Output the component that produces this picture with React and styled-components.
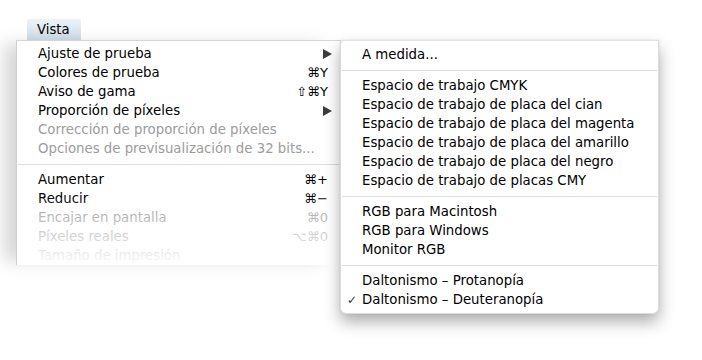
import React from "react";
import styled, { createGlobalStyle } from "styled-components";

const GlobalStyle = createGlobalStyle`
  html, body {
    margin: 0;
    padding: 0;
    background: #fff;
  }
  body {
    font-family: "DejaVu Sans", "Liberation Sans", sans-serif;
    font-size: 13px;
    color: #000;
  }
`;

const mainItems = [
  { label: "Ajuste de prueba", submenu: true },
  { label: "Colores de prueba", shortcut: "⌘Y" },
  { label: "Aviso de gama", shortcut: "⇧⌘Y" },
  { label: "Proporción de píxeles", submenu: true },
  { label: "Corrección de proporción de píxeles", disabled: true },
  { label: "Opciones de previsualización de 32 bits...", disabled: true },
  { separator: true },
  { label: "Aumentar", shortcut: "⌘+" },
  { label: "Reducir", shortcut: "⌘−" },
  { label: "Encajar en pantalla", shortcut: "⌘0", disabled: true },
  { label: "Píxeles reales", shortcut: "⌥⌘0", disabled: true },
  { label: "Tamaño de impresión", disabled: true },
];

const subItems = [
  { label: "A medida..." },
  { separator: true },
  { label: "Espacio de trabajo CMYK" },
  { label: "Espacio de trabajo de placa del cian" },
  { label: "Espacio de trabajo de placa del magenta" },
  { label: "Espacio de trabajo de placa del amarillo" },
  { label: "Espacio de trabajo de placa del negro" },
  { label: "Espacio de trabajo de placas CMY" },
  { separator: true },
  { label: "RGB para Macintosh" },
  { label: "RGB para Windows" },
  { label: "Monitor RGB" },
  { separator: true },
  { label: "Daltonismo – Protanopía" },
  { label: "Daltonismo – Deuteranopía", checked: true },
];

const App = () => {
  return (
    <>
      <GlobalStyle />
      <Page>
        <MenuBar>
          <MenuTitle>Vista</MenuTitle>
        </MenuBar>
        <DropArea>
          <MainMenu>
            {mainItems.map((item, i) =>
              item.separator ? (
                <Separator key={i} />
              ) : (
                <Row key={i} $disabled={item.disabled}>
                  <Label>{item.label}</Label>
                  {item.shortcut && <Shortcut>{item.shortcut}</Shortcut>}
                  {item.submenu && <Arrow />}
                </Row>
              )
            )}
            <Fade />
          </MainMenu>
          <SubMenu>
            {subItems.map((item, i) =>
              item.separator ? (
                <Separator key={i} />
              ) : (
                <Row key={i}>
                  {item.checked && <Check>✓</Check>}
                  <Label>{item.label}</Label>
                </Row>
              )
            )}
          </SubMenu>
        </DropArea>
      </Page>
    </>
  );
};

const Page = styled.div`
  width: 702px;
  height: 360px;
  padding-top: 19px;
  box-sizing: border-box;
  overflow: hidden;
`;

const MenuBar = styled.div`
  display: flex;
  height: 21px;
  padding-left: 27px;
`;

const MenuTitle = styled.div`
  display: flex;
  align-items: center;
  height: 21px;
  width: 54px;
  box-sizing: border-box;
  padding-left: 10px;
  font-size: 13.2px;
  background: linear-gradient(#eef3f8, #cedce8);
`;

const DropArea = styled.div`
  position: relative;
  display: flex;
`;

const MainMenu = styled.div`
  position: relative;
  width: 325px;
  height: 225px;
  margin-left: 16px;
  padding-top: 3px;
  box-sizing: border-box;
  background: #fff;
  border-top: 1px solid #d6d6d6;
  border-right: 1px solid #e2e2e2;
  border-left: 1px solid #d0d0d0;
  box-shadow: -16px 0 16px -4px rgba(0, 0, 0, 0.16);
  overflow: hidden;
`;

const Fade = styled.div`
  position: absolute;
  left: 0;
  right: 0;
  bottom: 0;
  height: 70px;
  background: linear-gradient(rgba(255, 255, 255, 0), rgba(255, 255, 255, 0.95));
  pointer-events: none;
`;

const SubMenu = styled.div`
  position: absolute;
  top: 0;
  left: 340px;
  width: 317px;
  padding: 4px 0;
  background: #fff;
  border: 1px solid #dcdcdc;
  border-top-color: #e4e4e4;
  border-radius: 4px 0 6px 6px;
  box-shadow: 0 8px 16px rgba(0, 0, 0, 0.32), 0 0 2px rgba(0, 0, 0, 0.12);
`;

const Row = styled.div`
  position: relative;
  display: flex;
  align-items: center;
  height: 19px;
  padding: 0 8px 0 21px;
  color: ${(p) => (p.$disabled ? "#9c9c9c" : "#000")};
  white-space: nowrap;
`;

const Label = styled.span`
  flex: 1;
  font-size: 13.3px;
`;

const Shortcut = styled.span`
  font-size: 13px;
  margin-right: 4px;
`;

const Arrow = styled.span`
  width: 0;
  height: 0;
  border-top: 5px solid transparent;
  border-bottom: 5px solid transparent;
  border-left: 9px solid #3c3c3c;
`;

const Check = styled.span`
  position: absolute;
  left: 6px;
  font-size: 12px;
  color: #333;
`;

const Separator = styled.div`
  height: 12px;
  display: flex;
  align-items: center;
  &::after {
    content: "";
    flex: 1;
    margin: 0 1px;
    border-top: 1px solid #dedede;
  }
`;

export default App;
